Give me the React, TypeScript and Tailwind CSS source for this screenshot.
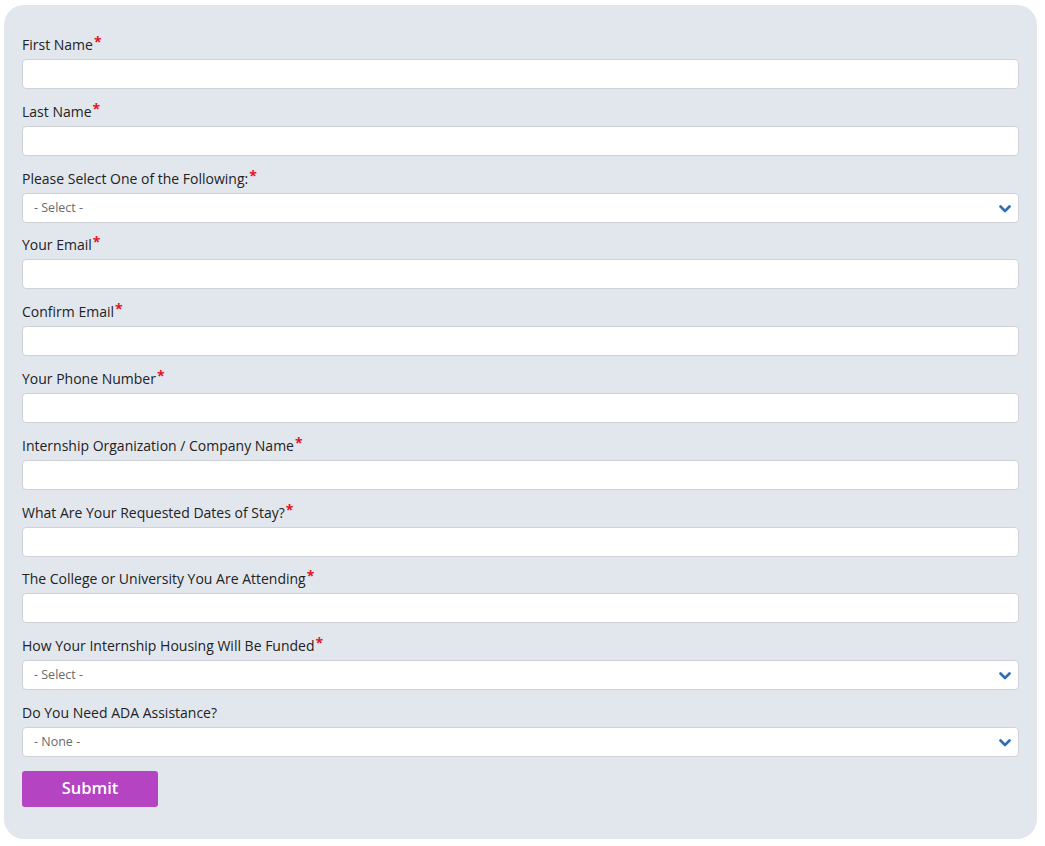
const fields: { label: string; required: boolean; kind: 'text' | 'select'; placeholder?: string }[] = [
  { label: 'First Name', required: true, kind: 'text' },
  { label: 'Last Name', required: true, kind: 'text' },
  { label: 'Please Select One of the Following:', required: true, kind: 'select', placeholder: '- Select -' },
  { label: 'Your Email', required: true, kind: 'text' },
  { label: 'Confirm Email', required: true, kind: 'text' },
  { label: 'Your Phone Number', required: true, kind: 'text' },
  { label: 'Internship Organization / Company Name', required: true, kind: 'text' },
  { label: 'What Are Your Requested Dates of Stay?', required: true, kind: 'text' },
  { label: 'The College or University You Are Attending', required: true, kind: 'text' },
  { label: 'How Your Internship Housing Will Be Funded', required: true, kind: 'select', placeholder: '- Select -' },
  { label: 'Do You Need ADA Assistance?', required: false, kind: 'select', placeholder: '- None -' },
];

function Chevron() {
  return (
    <svg width="12" height="8" viewBox="0 0 12 8" className="absolute right-[7px] top-[11px]">
      <path d="M1.5 1.5 L6 6 L10.5 1.5" fill="none" stroke="#2c6fb7" strokeWidth="2.6" strokeLinecap="round" strokeLinejoin="round" />
    </svg>
  );
}

export default function App() {
  return (
    <div className="min-h-[846px] bg-white pt-[5px] pl-[4px] pr-[8px] font-['Open_Sans',sans-serif]">
      <form
        className="w-[1033px] rounded-[20px] bg-[#e2e7ee] px-[18px] pt-[29px] pb-[32px]"
        onSubmit={(e) => e.preventDefault()}
      >
        {fields.map((f) => (
          <div key={f.label} className="mb-[11.8px]">
            <label className="mb-[5px] block h-[20px] text-[14px] font-medium leading-[22px] text-[#222]">
              {f.label}
              {f.required && <span className="relative -top-[3px] ml-[1px] text-[14px] font-bold text-[#e0141e]">*</span>}
            </label>
            {f.kind === 'text' ? (
              <input
                type="text"
                className="block h-[30px] w-full rounded-[4px] border border-[#cfd2d6] bg-white px-3 text-[13px] outline-none"
              />
            ) : (
              <div className="relative h-[30px] w-full rounded-[4px] border border-[#cfd2d6] bg-white">
                <span className="block pl-[11px] text-[12.5px] leading-[28px] text-[#6a6a6a]">{f.placeholder}</span>
                <Chevron />
              </div>
            )}
          </div>
        ))}
        <button
          type="submit"
          className="mt-[2px] h-[36px] w-[136px] rounded-[3px] bg-[#b444c1] text-[16.5px] font-semibold text-white"
        >
          Submit
        </button>
      </form>
    </div>
  );
}
